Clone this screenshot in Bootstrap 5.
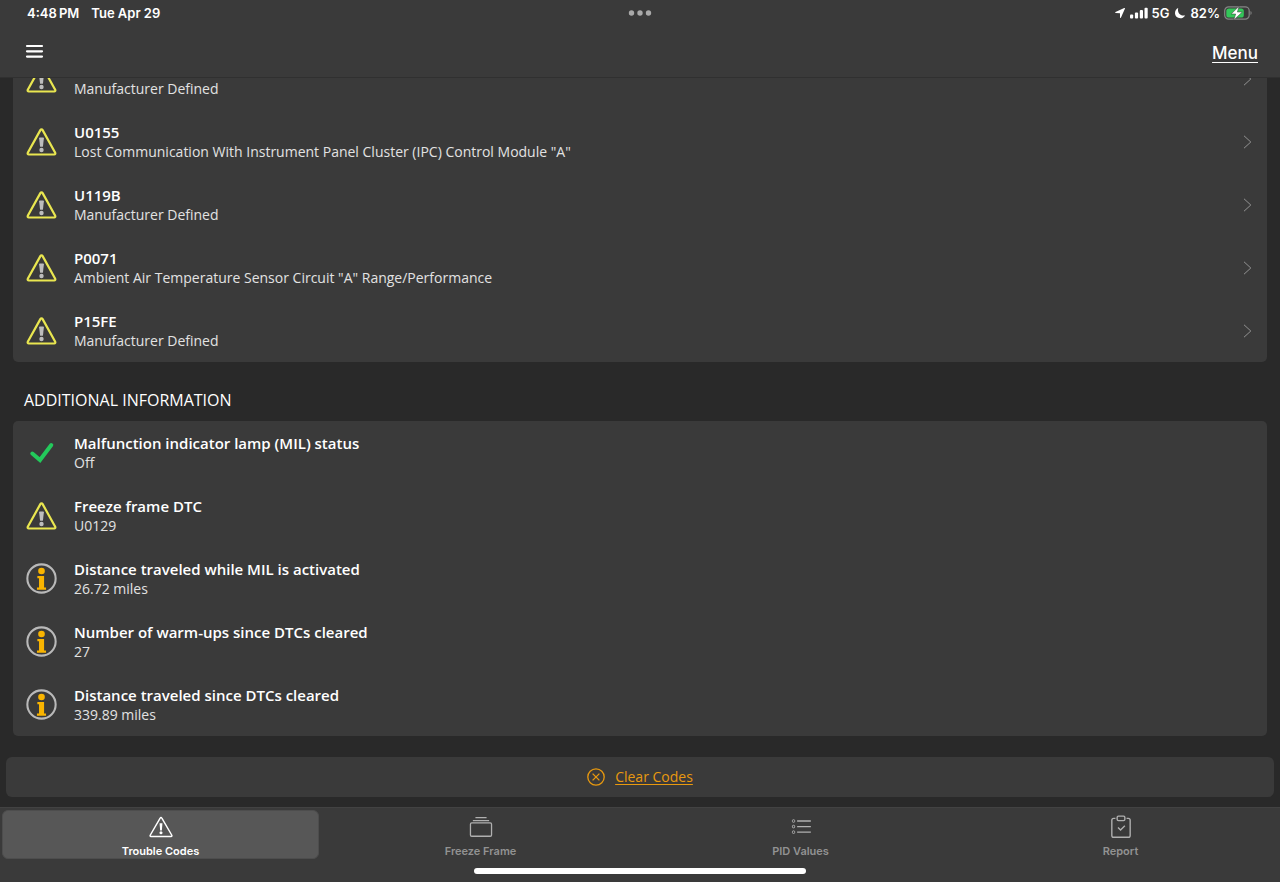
<!DOCTYPE html>
<html lang="en">
<head>
<meta charset="utf-8">
<meta name="viewport" content="width=device-width, initial-scale=1">
<title>Trouble Codes</title>
<link href="https://cdn.jsdelivr.net/npm/bootstrap@5.3.0/dist/css/bootstrap.min.css" rel="stylesheet">
<style>
  body { background: #292929; color: #fff; font-family: "Open Sans", sans-serif; }
  .ui-font { font-family: Inter, "Liberation Sans", sans-serif; }
  .app-header { background: #3a3a3a; border-bottom: 1px solid #303030; }
  .status-bar { display: grid; grid-template-columns: 1fr auto 1fr; height: 26px; padding: 0 28px 0 27px; font-size: 13px; line-height: 26px; font-weight: 600; }
  .nav-row { height: 51px; padding: 0 22px 0 24px; }
  .menu-link { font-size: 17px; line-height: 24px; padding-top: 2px; font-weight: 500; text-underline-offset: 3px; }
  .scroll-area { min-height: 0; padding: 0 13px 21px; }
  .panel { background: #3a3a3a; border-radius: 5px; }
  .code-row { min-height: 63px; padding: 0 15px 0 13px; gap: 17px; background: transparent; color: #fff; border: 0; }
  .code-row .row-title { font-size: 15px; line-height: 20px; min-height: 20px; font-weight: 600; }
  .code-row .row-note { font-size: 14px; line-height: 20px; color: #e2e2e2; }
  .section-title { font-size: 16px; line-height: 24px; margin: 26px 0 9px 11px; font-weight: 400; }
  .clear-bar { background: #3a3a3a; height: 40px; margin: 0 6px 10px; border-radius: 6px; }
  .clear-btn { color: #e8990f; font-size: 14px; line-height: 20px; gap: 10px; }
  .clear-btn span { text-decoration: underline; text-underline-offset: 2px; }
  .tab-bar { background: #3a3a3a; border-top: 1px solid #424242; padding-top: 2px; }
  .tab-item { height: 49px; margin: 0 1px 0 2px; padding: 4px 0 0; border-radius: 6px; color: #929292; font-size: 11px; line-height: 14px; font-weight: 600; gap: 5px; border: 1px solid transparent; background: transparent; }
  .tab-item.active { background: #575757; border-color: #4d4d4d; color: #fff; }
  .tab-item svg { color: #b0b0b0; }
  .tab-item.active svg { color: #fff; }
  .home-bar { width: 26%; height: 6px; border-radius: 3px; background: #fff; margin: 9px auto 8px; }
</style>
</head>
<body class="vh-100 d-flex flex-column overflow-hidden">
<svg class="d-none" aria-hidden="true">
  <symbol id="warn" viewBox="0 0 30 28">
    <path d="M15 1.300c.5 0 .8.200 1 .6L28.700 24.800c.4.9 0 1.700-1 1.700H2.300c-1 0-1.400-.8-1-1.700L14 1.900c.2-.4.500-.6 1-.6z" fill="none" stroke="#e9e650" stroke-width="2.200"/>
    <path d="M12.600 10.300q0-.8.8-.8h3.200q.8 0 .8.800l-1 8.500h-2.800z" fill="#bdbdbd"/><circle cx="15" cy="22" r="2.200" fill="#bdbdbd"/>
  </symbol>
  <symbol id="info" viewBox="0 0 30 30">
    <circle cx="15" cy="15" r="13.700" fill="none" stroke="#b9b9b9" stroke-width="2"/>
    <circle cx="15" cy="7.700" r="3.200" fill="#f9b400"/>
    <path d="M11 12.500h6.500v11.300h1.900V26h-8.800v-2.200h2v-9H11z" fill="#f9b400"/>
  </symbol>
  <symbol id="check" viewBox="0 0 30 30">
    <path d="M5.800 15.500l7.700 6.500L24.800 7" fill="none" stroke="#23c95b" stroke-width="4" stroke-linecap="round" stroke-linejoin="miter"/>
  </symbol>
  <symbol id="chev" viewBox="0 0 9 14">
    <path d="M1 .8L7.800 7 1 13.200" fill="none" stroke="#929292" stroke-width="1"/>
  </symbol>
</svg>

<header class="app-header ui-font flex-shrink-0">
  <div class="status-bar">
    <div class="d-flex gap-2"><span>4:48&#8201;PM</span><span class="ms-1">Tue Apr 29</span></div>
    <svg width="24" height="26" viewBox="0 0 24 26" fill="#a9a9a9"><circle cx="3.500" cy="13" r="2.700"/><circle cx="12" cy="13" r="2.700"/><circle cx="20.500" cy="13" r="2.700"/></svg>
    <div class="d-flex justify-content-end align-items-center">
      <svg width="10" height="10" viewBox="0 0 10 10" fill="#fff"><path d="M9.200 0c.6-.2.900.2.700.7L6 9.600c-.3.600-1 .5-1-.2V5.200L.7 5.100C0 5 0 4.300.5 4z"/></svg>
      <svg class="ms-1" width="19" height="12" viewBox="0 0 19 12" fill="#fff"><rect x="1" y="7.500" width="3.200" height="4" rx="1"/><rect x="5.900" y="5.500" width="3.200" height="6" rx="1"/><rect x="10.800" y="3" width="3.200" height="8.500" rx="1"/><rect x="15.500" y=".8" width="3.200" height="10.700" rx="1"/></svg>
      <span class="ms-1">5G</span>
      <svg class="mx-1" width="13" height="12" viewBox="0 0 13 12" fill="#fff"><path d="M4.200 1C3 6 6.500 9.400 11.200 8.400 9.800 10.500 8 11.200 6.400 11.200 3.200 11.200 1 9 1 6 1 3.800 2.200 1.900 4.200 1z"/></svg>
      <span>82%</span>
      <svg class="ms-1" width="28" height="14" viewBox="0 0 28 14"><rect x=".7" y=".8" width="24.500" height="12.400" rx="4" fill="none" stroke="#858585" stroke-width="1.200"/><path d="M26.500 5v4c1.500-.5 1.500-3.500 0-4z" fill="#858585"/><rect x="2.300" y="2.400" width="17.500" height="9.200" rx="2.700" fill="#33c759"/><path d="M15 .3L7.200 8h4.500l-1.900 5.900L18.300 6h-4.900z" fill="#fff" stroke="#3a3a3a" stroke-width=".5"/></svg>
    </div>
  </div>
  <div class="nav-row d-flex align-items-center justify-content-between">
    <button type="button" class="btn p-0 border-0 d-flex" aria-label="Open navigation"><svg width="20" height="16" viewBox="0 0 20 16" stroke="#fff" stroke-width="2.200" stroke-linecap="round"><path d="M3 2h15M3 7.300h15M3 12.600h15"/></svg></button>
    <a href="#" class="menu-link text-white">Menu</a>
  </div>
</header>

<main class="scroll-area flex-grow-1 d-flex flex-column justify-content-end overflow-hidden">
  <div class="panel flex-shrink-0">
    <button type="button" class="code-row d-flex align-items-center w-100 text-start"><svg width="31" height="28"><use href="#warn"/></svg><span class="flex-grow-1"><span class="row-title d-block"></span><span class="row-note d-block">Manufacturer Defined</span></span><svg width="9" height="14"><use href="#chev"/></svg></button>
    <button type="button" class="code-row d-flex align-items-center w-100 text-start"><svg width="31" height="28"><use href="#warn"/></svg><span class="flex-grow-1"><span class="row-title d-block">U0155</span><span class="row-note d-block">Lost Communication With Instrument Panel Cluster (IPC) Control Module "A"</span></span><svg width="9" height="14"><use href="#chev"/></svg></button>
    <button type="button" class="code-row d-flex align-items-center w-100 text-start"><svg width="31" height="28"><use href="#warn"/></svg><span class="flex-grow-1"><span class="row-title d-block">U119B</span><span class="row-note d-block">Manufacturer Defined</span></span><svg width="9" height="14"><use href="#chev"/></svg></button>
    <button type="button" class="code-row d-flex align-items-center w-100 text-start"><svg width="31" height="28"><use href="#warn"/></svg><span class="flex-grow-1"><span class="row-title d-block">P0071</span><span class="row-note d-block">Ambient Air Temperature Sensor Circuit "A" Range/Performance</span></span><svg width="9" height="14"><use href="#chev"/></svg></button>
    <button type="button" class="code-row d-flex align-items-center w-100 text-start"><svg width="31" height="28"><use href="#warn"/></svg><span class="flex-grow-1"><span class="row-title d-block">P15FE</span><span class="row-note d-block">Manufacturer Defined</span></span><svg width="9" height="14"><use href="#chev"/></svg></button>
  </div>
  <h2 class="section-title flex-shrink-0">ADDITIONAL INFORMATION</h2>
  <div class="panel flex-shrink-0">
    <div class="code-row d-flex align-items-center"><svg width="31" height="30"><use href="#check"/></svg><div><div class="row-title">Malfunction indicator lamp (MIL) status</div><div class="row-note">Off</div></div></div>
    <div class="code-row d-flex align-items-center"><svg width="31" height="28"><use href="#warn"/></svg><div><div class="row-title">Freeze frame DTC</div><div class="row-note">U0129</div></div></div>
    <div class="code-row d-flex align-items-center"><svg width="31" height="31"><use href="#info"/></svg><div><div class="row-title">Distance traveled while MIL is activated</div><div class="row-note">26.72 miles</div></div></div>
    <div class="code-row d-flex align-items-center"><svg width="31" height="31"><use href="#info"/></svg><div><div class="row-title">Number of warm-ups since DTCs cleared</div><div class="row-note">27</div></div></div>
    <div class="code-row d-flex align-items-center"><svg width="31" height="31"><use href="#info"/></svg><div><div class="row-title">Distance traveled since DTCs cleared</div><div class="row-note">339.89 miles</div></div></div>
  </div>
</main>

<div class="clear-bar flex-shrink-0 d-flex">
  <button type="button" class="clear-btn btn border-0 p-0 w-100 d-flex align-items-center justify-content-center">
    <svg width="18" height="18" viewBox="0 0 18 18" fill="none" stroke="#e8990f" stroke-width="1.300"><circle cx="9" cy="9" r="8.200"/><path d="M5.600 5.600l6.800 6.800M12.400 5.600l-6.800 6.800"/></svg>
    <span>Clear Codes</span>
  </button>
</div>

<footer class="tab-bar ui-font flex-shrink-0">
  <nav class="row g-0">
    <div class="col d-flex"><button type="button" class="tab-item active flex-fill d-flex flex-column align-items-center" aria-current="page"><svg width="28" height="28" viewBox="0 0 28 28" fill="none" stroke="currentColor" stroke-width="1.700"><path d="M14 3c.5 0 .8.200 1 .6l11.600 20c.4.8 0 1.400-.8 1.400H2.200c-.8 0-1.200-.6-.8-1.400L13 3.600c.2-.4.500-.6 1-.6z"/><path d="M12.300 9.500h3.400l-.7 8.500h-2z" fill="currentColor" stroke="none"/><circle cx="14" cy="20.800" r="1.800" fill="currentColor" stroke="none"/></svg>Trouble Codes</button></div>
    <div class="col d-flex"><button type="button" class="tab-item flex-fill d-flex flex-column align-items-center"><svg width="28" height="28" viewBox="0 0 28 28" fill="none" stroke="currentColor" stroke-width="1.500"><rect x="1.700" y="9.300" width="24.600" height="15.500" rx="1.500"/><path d="M4.500 6.500h19M7.500 3h13"/></svg>Freeze Frame</button></div>
    <div class="col d-flex"><button type="button" class="tab-item flex-fill d-flex flex-column align-items-center"><svg width="28" height="28" viewBox="0 0 28 28" fill="none" stroke="currentColor"><path d="M9.500 7h16M9.500 13.500h16M9.500 20h16" stroke-width="1.500"/><g stroke-width="1.100"><rect x="4" y="5.500" width="2.600" height="3" rx="1"/><rect x="4" y="12" width="2.600" height="3" rx="1"/><rect x="4" y="18.500" width="2.600" height="3" rx="1"/></g></svg>PID Values</button></div>
    <div class="col d-flex"><button type="button" class="tab-item flex-fill d-flex flex-column align-items-center"><svg width="28" height="28" viewBox="0 0 28 28" fill="none" stroke="currentColor" stroke-width="1.600"><path d="M7.500 4H5.500Q3.300 4 3.300 6.200v17.600Q3.300 26 5.500 26h17q2.200 0 2.200-2.200V6.200Q24.700 4 22.500 4h-2M10.500 14.500l3 3 5-5"/><rect x="9.500" y="1.300" width="9" height="5.200" rx="1.500"/></svg>Report</button></div>
  </nav>
  <div class="home-bar"></div>
</footer>
<script src="https://cdn.jsdelivr.net/npm/bootstrap@5.3.0/dist/js/bootstrap.bundle.min.js"></script>
</body>
</html>
